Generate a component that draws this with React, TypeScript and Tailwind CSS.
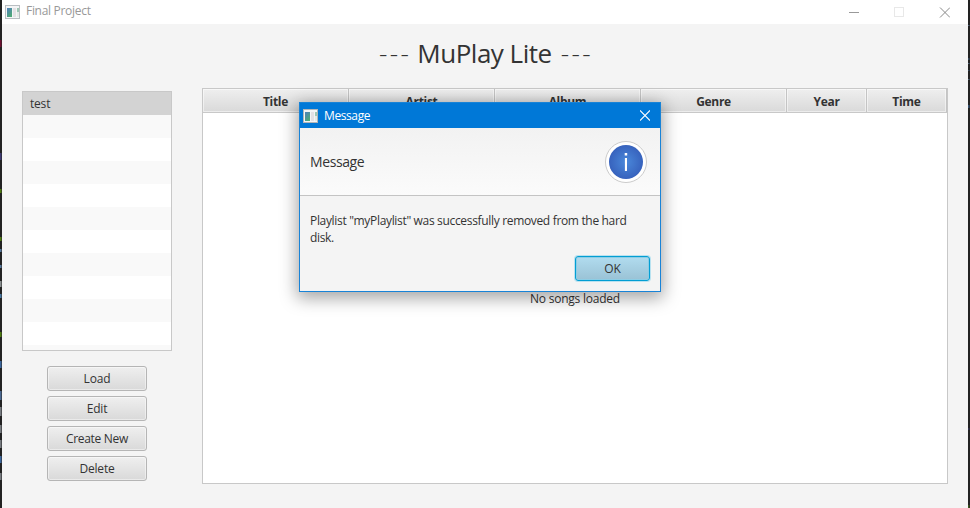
import React from 'react';

const columns = [
  { label: 'Title', width: 'w-[146px]' },
  { label: 'Artist', width: 'w-[146px]' },
  { label: 'Album', width: 'w-[146px]' },
  { label: 'Genre', width: 'w-[146px]' },
  { label: 'Year', width: 'w-[80px]' },
  { label: 'Time', width: 'w-[80px]' },
];

const actions = [
  { label: 'Load', text: 'tracking-[-0.15px]' },
  { label: 'Edit', text: 'tracking-[-0.15px]' },
  { label: 'Create New', text: 'tracking-[-0.3px]' },
  { label: 'Delete', text: 'tracking-[-0.2px]' },
];

const leftSpecks = [
  [40, 7, '#6b1030'], [153, 7, '#3d3a70'], [189, 4, '#4d7a10'], [237, 4, '#4d7a10'],
  [249, 3, '#56789c'], [265, 3, '#56789c'], [281, 6, '#8a8f90'], [294, 4, '#4676a0'],
  [332, 5, '#4d7a10'], [361, 7, '#3c669c'], [391, 9, '#4a6890'], [407, 9, '#777b80'],
  [425, 8, '#777b80'], [440, 8, '#777b80'], [456, 7, '#3c669c'], [473, 7, '#777b80'],
] as const;

const rightSpecks = [
  [25, 1, '#526478'], [58, 2, '#34465a'], [63, 1, '#526478'], [70, 1, '#34465a'],
  [79, 1, '#526478'], [105, 3, '#34506e'], [428, 2, '#30304c'], [505, 3, '#38561c'],
] as const;

function Edge({ specks }: { specks: readonly (readonly [number, number, string])[] }) {
  return (
    <svg className="h-[508px] w-[2px] shrink-0" viewBox="0 0 2 508" preserveAspectRatio="none">
      <rect width="2" height="508" fill="#222222" />
      {specks.map(([y, h, c]) => (
        <rect key={y} y={y} width="1.5" height={h} fill={c} />
      ))}
    </svg>
  );
}

function AppIcon({ faded = false }: { faded?: boolean }) {
  const frame = faded ? '#b9bec2' : '#b4b6b8';
  const id = faded ? 'paneA' : 'paneB';
  return (
    <svg className="h-[14px] w-[15px] shrink-0" viewBox="0 0 15 14">
      <defs>
        <linearGradient id={id} x1="0" y1="0" x2="0.6" y2="1">
          <stop offset="0" stopColor="#4f7fbc" />
          <stop offset="1" stopColor="#4fa878" />
        </linearGradient>
      </defs>
      <rect x="0" y="0" width="15" height="14" fill={frame} />
      <rect x="1" y="1" width="13" height="12" fill="#f4f5f6" />
      <rect x="2" y="3" width="5" height="9" fill={`url(#${id})`} />
      <rect x="8" y="3" width="3" height="9" fill="#e3e1e4" />
      <rect x="12" y="3" width="2" height="4" fill="#9ec7b4" />
      <rect x="12" y="7" width="2" height="5" fill="#e4eae6" />
    </svg>
  );
}

function MessageDialog() {
  return (
    <div className="absolute left-[299px] top-[102px] flex h-[190px] w-[362px] flex-col border border-[#1883d7] bg-[#f4f4f4] shadow-[0_4px_16px_2px_rgba(0,0,0,0.36)]">
      <div className="flex h-[25px] shrink-0 items-center bg-[#0078d7] pl-[3px] pr-[10px] text-white">
        <AppIcon />
        <span className="ml-[6px] flex-1 text-[12px] leading-[16px] tracking-[-0.4px]">Message</span>
        <svg className="h-[11px] w-[10px]" viewBox="0 0 10 11" fill="none" stroke="#fff" strokeWidth="1.1">
          <path d="M0 .5l10 10M10 .5l-10 10" />
        </svg>
      </div>
      <div className="flex h-[68px] shrink-0 items-center justify-between border-b border-[#c4c4c4] bg-gradient-to-b from-[#f2f2f2] to-[#fbfbfb] pl-[10px] pr-[13px]">
        <span className="text-[14px] leading-[20px] tracking-[-0.4px]">Message</span>
        <svg className="h-[42px] w-[42px]" viewBox="0 0 42 42">
          <defs>
            <radialGradient id="infoFill">
              <stop offset="0" stopColor="#4a88da" />
              <stop offset="1" stopColor="#3762bd" />
            </radialGradient>
          </defs>
          <circle cx="21" cy="21" r="20.500" fill="#fff" stroke="#cbcbcb" />
          <circle cx="21" cy="21" r="17" fill="url(#infoFill)" />
          <rect x="19.700" y="12" width="2.500" height="2.500" fill="#fff" />
          <rect x="19.900" y="17" width="2.100" height="13" fill="#fff" />
        </svg>
      </div>
      <p className="h-[60px] shrink-0 whitespace-nowrap pl-[10px] pt-[16px] text-[12px] leading-[17px] tracking-[-0.33px]">
        Playlist "myPlaylist" was successfully removed from the hard
        <br />
        disk.
      </p>
      <div className="flex justify-end pr-[10px]">
        <button className="h-[25px] w-[75px] rounded-[3px] border border-[#039ed3] bg-gradient-to-b from-[#b1dcef] to-[#9ac2d5] text-[12px] leading-[22px] tracking-[-0.2px] shadow-[0_0_0_1px_#b9e2f0,inset_0_0_0_1px_#8ccde5]">
          OK
        </button>
      </div>
    </div>
  );
}

export default function App() {
  return (
    <div className="relative flex h-[508px] w-[970px] overflow-hidden bg-[#f4f4f4] font-['Open_Sans','Noto_Sans',sans-serif] text-[#333333]">
      <Edge specks={leftSpecks} />
      <div className="flex w-[966px] flex-col">
        <header className="flex h-[24px] shrink-0 items-center bg-white pl-[3px] pr-[18px] text-[#999999]">
          <AppIcon faded />
          <span className="ml-[6px] flex-1 pb-[2px] text-[12px] leading-[16px] tracking-[-0.3px]">Final Project</span>
          <svg className="h-[11px] w-[101px]" viewBox="0 0 101 11" fill="none">
            <path d="M0 5.500h10" stroke="#999" />
            <rect x="45.500" y=".5" width="9" height="9" stroke="#e8e8e8" />
            <path d="M91 .5l10 10M101 .5l-10 10" stroke="#888" />
          </svg>
        </header>
        <h1 className="flex h-[64px] shrink-0 justify-center whitespace-pre pl-[2px] pt-[11px] text-[26px] leading-[36px] tracking-[-0.5px]">
          <span className="font-light tracking-[2.4px]">---</span>
          <span className="ml-[6px] mr-[9px]">MuPlay Lite</span>
          <span className="font-light tracking-[2.4px]">---</span>
        </h1>
        <main className="flex gap-[30px] pl-[20px]">
          <aside className="flex w-[150px] flex-col items-center pt-[3px]">
            <ul className="h-[260px] w-full overflow-hidden border border-[#c8c8c8] bg-white text-[12px] tracking-[-0.2px]">
              <li className="h-[23px] bg-[#d3d3d3] pl-[7px] leading-[23px]">test</li>
              {Array.from({ length: 11 }, (_, i) => (
                <li key={i} className="h-[23px] odd:bg-white even:bg-[#f9f9f9]" />
              ))}
            </ul>
            <div className="mt-[15px] flex flex-col gap-[5px]">
              {actions.map(({ label, text }) => (
                <button
                  key={label}
                  className={`h-[25px] w-[100px] rounded-[3px] border border-[#b5b5b5] bg-gradient-to-b from-[#efefef] to-[#d9d9d9] text-[12px] leading-[22px] shadow-[inset_0_0_0_1px_rgba(255,255,255,0.45)] ${text}`}
                >
                  {label}
                </button>
              ))}
            </div>
          </aside>
          <section className="flex h-[396px] w-[746px] flex-col border border-[#c8c8c8] bg-white">
            <div className="flex h-[24px] shrink-0 border-b border-[#c8c8c8] bg-gradient-to-b from-[#efefef] to-[#d9d9d9]">
              {columns.map(({ label, width }) => (
                <div
                  key={label}
                  className={`h-[23px] shrink-0 border-r border-[#c4c4c4] text-center text-[12px] font-bold leading-[26px] tracking-[-0.3px] shadow-[inset_0_0_0_1px_rgba(255,255,255,0.5)] ${width}`}
                >
                  {label}
                </div>
              ))}
            </div>
            <div className="flex flex-1 items-center justify-center pt-[2px] text-[12px] leading-[16px] tracking-[-0.23px]">
              No songs loaded
            </div>
          </section>
        </main>
      </div>
      <Edge specks={rightSpecks} />
      <MessageDialog />
    </div>
  );
}
